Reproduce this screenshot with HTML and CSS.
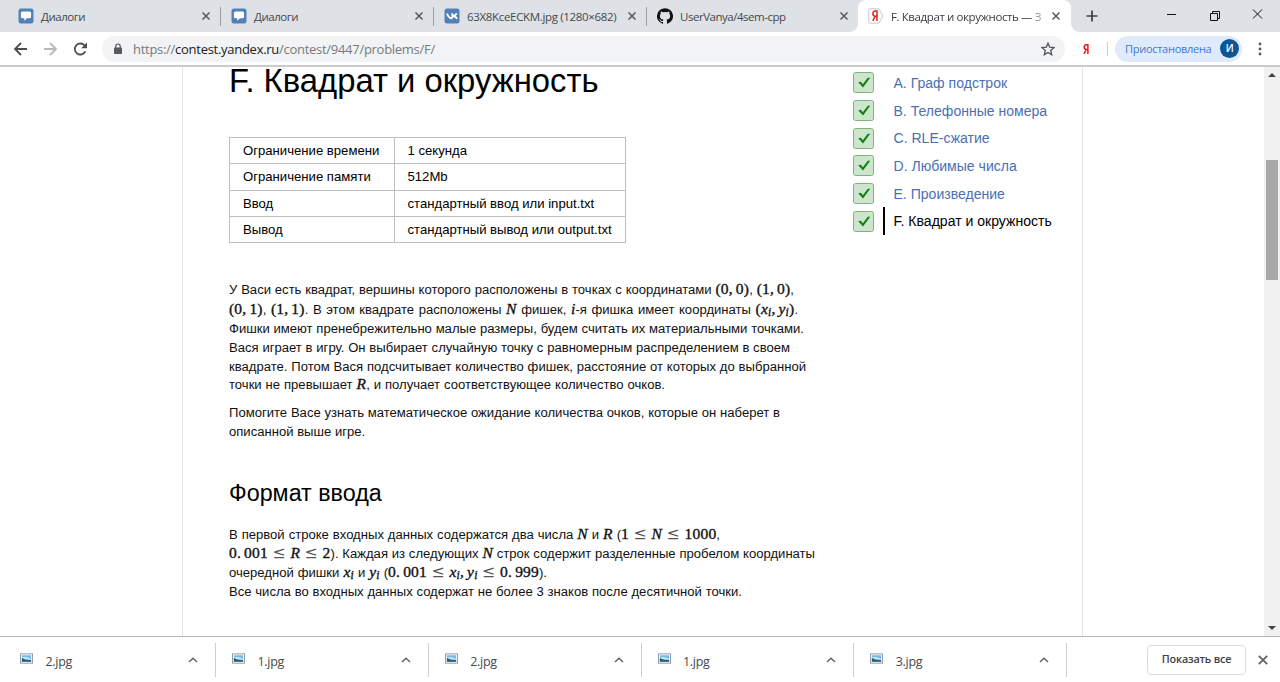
FILE: index.html
```html
<!DOCTYPE html>
<html lang="ru">
<head>
<meta charset="utf-8">
<title>F. Квадрат и окружность</title>
<link rel="stylesheet" href="styles.css">
</head>
<body>
<svg class="defs" width="0" height="0">
  <symbol id="chat" viewBox="0 0 16 16"><rect x=".5" y=".5" width="15" height="15" rx="2.5" fill="#5181b8"/><path d="M4.5 3.5h7a1.6 1.6 0 0 1 1.6 1.6v3.600a1.600 1.600 0 0 1-1.600 1.600H9L6.300 12.800v-2.500H4.500a1.600 1.600 0 0 1-1.600-1.600V5.100a1.600 1.600 0 0 1 1.600-1.600z" fill="#fff"/></symbol>
  <symbol id="close" viewBox="0 0 10 10"><path d="M1.500 1.500l7 7M8.500 1.500l-7 7" stroke="currentColor" stroke-width="1.500" fill="none"/></symbol>
  <symbol id="up" viewBox="0 0 10 6"><path d="M1 5l4-3.800L9 5" stroke="#5f6368" stroke-width="1.500" fill="none"/></symbol>
  <symbol id="picture" viewBox="0 0 14 11"><rect x=".5" y=".5" width="13" height="10" fill="#fff" stroke="#8b969e"/><rect x="2" y="2" width="10" height="7" fill="#76b8e8"/><path d="M2 4.500q4-2 10 1.500v1H2z" fill="#cce8f6"/><path d="M2 5l4 1.500 6 .5v2H2z" fill="#2a5f73"/></symbol>
  <symbol id="tick" viewBox="0 0 21 21"><rect x=".5" y=".5" width="20" height="20" rx="2" fill="#cce5cc" stroke="#80b380"/><path d="M5.200 10.300L8 9.800l1.800 2.400L14.800 5.800h2.400L10 15.600z" fill="#108010"/></symbol>
</svg>

<header class="tabs">
  <div class="tab"><svg class="fav"><use href="#chat"/></svg><span class="tab-title">Диалоги</span><svg class="x"><use href="#close"/></svg></div>
  <div class="tab"><svg class="fav"><use href="#chat"/></svg><span class="tab-title">Диалоги</span><svg class="x"><use href="#close"/></svg></div>
  <div class="tab"><svg class="fav" viewBox="0 0 16 16"><rect x=".5" y=".5" width="15" height="15" rx="2.500" fill="#5181b8"/><path d="M3 5.500q1.500 4.800 5.300 5M8.300 5.200v5M12.800 5.300q-1 2-3.800 2.700 2.800.5 4.200 2.700" stroke="#fff" stroke-width="1.800" fill="none"/></svg><span class="tab-title file-title">63X8KceECKM.jpg (1280×682)</span><svg class="x"><use href="#close"/></svg></div>
  <div class="tab last"><svg class="fav" viewBox="0 0 16 16"><path fill="#111" d="M8 .2a8 8 0 0 0-2.530 15.590c.4.070.550-.170.550-.380v-1.490c-2.230.480-2.690-.950-2.690-.950-.360-.920-.890-1.170-.890-1.170-.730-.500.050-.490.050-.490.800.060 1.230.830 1.230.830.720 1.220 1.870.870 2.330.660.070-.520.280-.870.510-1.070-1.780-.200-3.640-.890-3.640-3.950 0-.870.310-1.590.820-2.150-.080-.200-.360-1.020.080-2.120 0 0 .670-.210 2.200.820a7.600 7.600 0 0 1 4 0c1.530-1.040 2.200-.820 2.200-.820.440 1.100.160 1.920.080 2.120.510.560.820 1.270.820 2.150 0 3.070-1.870 3.750-3.650 3.950.290.250.540.730.540 1.480v2.200c0 .210.150.460.550.380A8 8 0 0 0 8 .2z"/></svg><span class="tab-title">UserVanya/4sem-cpp</span><svg class="x"><use href="#close"/></svg></div>
  <div class="tab active"><svg class="fav" viewBox="0 0 16 16"><path d="M2 .8h9l4 7.200-4 7.200H2q-1.200 0-1.200-1.200V2Q.8.8 2 .8z" fill="#fff" stroke="#c8c8c8"/><path d="M9 13V3H7.300Q4.900 3 4.900 5.800q0 2.400 2.300 2.400H9M7 8.200L4.800 13" fill="none" stroke="#e02020" stroke-width="1.500"/></svg><span class="tab-title fade">F. Квадрат и окружность — З</span><svg class="x"><use href="#close"/></svg></div>
  <svg class="plus" viewBox="0 0 12 12"><path d="M6 .5v11M.5 6h11" stroke="#3c4043" stroke-width="1.700"/></svg>
  <svg class="winctl" viewBox="0 0 100 14"><g fill="none" stroke="#111"><path d="M4 5.500h9M47.500 4.500h7v7h-7zM49.500 4.500v-2h7v7h-2M90 .5l9 9M99 .5l-9 9"/></g></svg>
</header>

<nav class="toolbar">
  <svg class="nav-icons" viewBox="0 0 80 16"><g fill="none" stroke-width="1.800"><path d="M15 8H3M9 2L3 8l6 6" stroke="#4b4f54"/><path d="M32 8h12M38 2l6 6-6 6" stroke="#b6b8ba"/><path d="M73.300 10.300A5.500 5.500 0 1 1 72.800 4.800" stroke="#4b4f54"/></g><path d="M75 1.500v5.800h-5.800z" fill="#4b4f54"/></svg>
  <div class="address">
    <svg class="lock" viewBox="0 0 10 12"><rect x="1" y="4.500" width="8" height="6.500" rx=".8" fill="#55595e"/><path d="M2.800 5V3.200a2.200 2.200 0 0 1 4.400 0V5" fill="none" stroke="#55595e" stroke-width="1.200"/></svg>
    <span class="url">https://<b>contest.yandex.ru</b>/contest/9447/problems/F/</span>
    <svg class="star" viewBox="0 0 14 14"><path d="M7 1.200l1.700 4 4.300.4-3.300 2.800 1 4.300L7 10.400l-3.700 2.300 1-4.300L1 5.600l4.300-.4z" fill="none" stroke="#4f5357" stroke-width="1.300"/></svg>
  </div>
  <svg class="ya" viewBox="0 0 6 10"><path d="M4.900 10V.8H3.800Q1.200.8 1.200 3.300q0 2.200 2.300 2.200H5M3.200 5.500L1 10" fill="none" stroke="#e32020" stroke-width="1.500"/></svg>
  <i class="divider"></i>
  <div class="profile"><span>Приостановлена</span><b>И</b></div>
  <svg class="dots" viewBox="0 0 4 14"><g fill="#55595e"><circle cx="2" cy="2" r="1.400"/><circle cx="2" cy="7" r="1.400"/><circle cx="2" cy="12" r="1.400"/></g></svg>
</nav>

<div class="viewport">
  <div class="page">
    <main class="problem">
      <h1>F. Квадрат и окружность</h1>
      <table class="limits">
        <tr><td class="key">Ограничение времени</td><td>1 секунда</td></tr>
        <tr><td class="key">Ограничение памяти</td><td>512Mb</td></tr>
        <tr><td class="key">Ввод</td><td>стандартный ввод или input.txt</td></tr>
        <tr><td class="key">Вывод</td><td>стандартный вывод или output.txt</td></tr>
      </table>
      <div class="legend">
        <div class="line tall w565">У Васи есть квадрат, вершины которого расположены в точках с координатами <span class="m">(0,<s></s>0)</span>, <span class="m">(1,<s></s>0)</span>,</div>
        <div class="line tall w569"><span class="m">(0,<s></s>1)</span>, <span class="m">(1,<s></s>1)</span>. В этом квадрате расположены <span class="m"><em>N</em></span> фишек, <span class="m"><em>i</em></span>-я фишка имеет координаты <span class="m">(<em>x<sub>i</sub></em>,<s></s><em>y<sub>i</sub></em>)</span>.</div>
        <div class="line w575">Фишки имеют пренебрежительно малые размеры, будем считать их материальными точками.</div>
        <div class="line w561">Вася играет в игру. Он выбирает случайную точку с равномерным распределением в своем</div>
        <div class="line w577">квадрате. Потом Вася подсчитывает количество фишек, расстояние от которых до выбранной</div>
        <div class="line w436">точки не превышает <span class="m"><em>R</em></span>, и получает соответствующее количество очков.</div>
      </div>
      <div class="legend second">
        <div class="line w551">Помогите Васе узнать математическое ожидание количества очков, которые он наберет в</div>
        <div class="line w136">описанной выше игре.</div>
      </div>
      <h2>Формат ввода</h2>
      <div class="legend">
        <div class="line w491">В первой строке входных данных содержатся два числа <span class="m"><em>N</em></span> и <span class="m"><em>R</em></span> (<span class="m">1<u>≤</u><em>N</em><u>≤</u>1000</span>,</div>
        <div class="line w586"><span class="m">0.<s></s>001<u>≤</u><em>R</em><u>≤</u>2</span>). Каждая из следующих <span class="m"><em>N</em></span> строк содержит разделенные пробелом координаты</div>
        <div class="line w318">очередной фишки <span class="m"><em>x<sub>i</sub></em></span> и <span class="m"><em>y<sub>i</sub></em></span> (<span class="m">0.<s></s>001<u>≤</u><em>x<sub>i</sub></em>,<s></s><em>y<sub>i</sub></em><u>≤</u>0.<s></s>999</span>).</div>
        <div class="line w513">Все числа во входных данных содержат не более 3 знаков после десятичной точки.</div>
      </div>
    </main>
    <aside class="problems">
      <div class="item"><svg class="tick"><use href="#tick"/></svg><a>A. Граф подстрок</a></div>
      <div class="item"><svg class="tick"><use href="#tick"/></svg><a>B. Телефонные номера</a></div>
      <div class="item"><svg class="tick"><use href="#tick"/></svg><a>C. RLE-сжатие</a></div>
      <div class="item"><svg class="tick"><use href="#tick"/></svg><a>D. Любимые числа</a></div>
      <div class="item"><svg class="tick"><use href="#tick"/></svg><a>E. Произведение</a></div>
      <div class="item current"><svg class="tick"><use href="#tick"/></svg><a>F. Квадрат и окружность</a></div>
    </aside>
  </div>
  <div class="scrollbar">
    <svg viewBox="0 0 8 4"><path d="M0 4l4-4 4 4z" fill="#444"/></svg>
    <i class="thumb"></i>
    <svg viewBox="0 0 8 4"><path d="M0 0l4 4 4-4z" fill="#444"/></svg>
  </div>
</div>

<footer class="shelf">
  <div class="file"><svg class="pic"><use href="#picture"/></svg><span>2.jpg</span><svg class="up"><use href="#up"/></svg></div>
  <div class="file"><svg class="pic"><use href="#picture"/></svg><span>1.jpg</span><svg class="up"><use href="#up"/></svg></div>
  <div class="file"><svg class="pic"><use href="#picture"/></svg><span>2.jpg</span><svg class="up"><use href="#up"/></svg></div>
  <div class="file"><svg class="pic"><use href="#picture"/></svg><span>1.jpg</span><svg class="up"><use href="#up"/></svg></div>
  <div class="file"><svg class="pic"><use href="#picture"/></svg><span>3.jpg</span><svg class="up"><use href="#up"/></svg></div>
  <button class="show-all">Показать все</button>
  <svg class="shelf-x"><use href="#close"/></svg>
</footer>
</body>
</html>
```
FILE: styles.css
```css
* { box-sizing: border-box; }
body {
  margin: 0; width: 1280px; height: 682px; overflow: hidden;
  display: flex; flex-direction: column;
  background: #fff; color: #000;
  font: 13px "Liberation Sans", Arial, sans-serif;
}
svg { display: block; flex: none; }
.defs { position: absolute; }

/* Tab strip */
.tabs {
  height: 32px; flex: none; display: flex; align-items: center;
  padding-left: 8px; background: #dee1e6;
  font: 11.500px "Open Sans", "Noto Sans", sans-serif; color: #45494d;
}
.tab {
  width: 213px; height: 32px; flex: none; display: flex; align-items: center;
  padding: 0 10px 0 10px; position: relative;
}
.tab:not(.last):not(.active)::after {
  content: ""; position: absolute; right: 0; top: 7px; width: 1px; height: 19px; background: #9a9da1;
}
.tab.last { width: 211px; padding-right: 9px; }
.tab.active { background: #fff; border-radius: 8px 8px 0 0; width: 213px; color: #3c4043; }
.tab.active::before, .tab.active::after {
  content: ""; position: absolute; bottom: 0; width: 8px; height: 8px;
}
.tab.active::before { left: -8px; background: radial-gradient(circle at 0 0, transparent 7.5px, #fff 8px); }
.tab.active::after { right: -8px; background: radial-gradient(circle at 100% 0, transparent 7.5px, #fff 8px); }
.fav { width: 16px; height: 16px; }
.tab-title { flex: 1; margin-left: 7px; white-space: nowrap; letter-spacing: -.47px; }
.file-title { letter-spacing: -.33px; }
.fade { -webkit-mask-image: linear-gradient(90deg, #000 86%, transparent); mask-image: linear-gradient(90deg, #000 86%, transparent); letter-spacing: -.4px; }
.x { width: 10px; height: 10px; color: #55595e; }
.plus { width: 12px; height: 12px; margin-left: 15px; }
.winctl { width: 100px; height: 14px; margin-left: 65px; }

/* Toolbar */
.toolbar {
  height: 35px; flex: none; display: flex; align-items: center;
  padding-left: 12px; border-bottom: 2px solid #cbcbcb;
  font-family: "Open Sans", "Noto Sans", sans-serif;
}
.nav-icons { width: 80px; height: 16px; }
.address {
  width: 963px; height: 26px; margin-left: 10px; padding: 0 10px 0 11px;
  display: flex; align-items: center; border-radius: 13px; background: #f1f3f4;
}
.lock { width: 10px; height: 12px; }
.url { flex: 1; margin-left: 10px; font-size: 13px; letter-spacing: -.28px; color: #777b80; }
.url b { font-weight: 400; color: #202124; }
.star { width: 14px; height: 14px; }
.ya { width: 6px; height: 10px; margin-left: 18px; }
.divider { width: 1px; height: 14px; margin-left: 18px; background: #c9ccd0; }
.profile {
  width: 127px; height: 26px; margin-left: 7px; padding: 0 3px 0 10px;
  display: flex; align-items: center; justify-content: space-between;
  border-radius: 13px; background: #dfebfc; color: #3f77d6;
  font-size: 11px; letter-spacing: -.28px; white-space: nowrap;
}
.profile b {
  width: 19px; height: 19px; border-radius: 50%; background: #0b5796; color: #fff;
  font-size: 10px; font-weight: 600; line-height: 19px; text-align: center;
}
.dots { width: 4px; height: 14px; margin-left: 16px; }

/* Page */
.viewport { flex: 1; min-height: 0; display: flex; justify-content: space-between; overflow: hidden; }
.page {
  width: 901px; margin-left: 182px; padding-left: 46px;
  display: grid; grid-template-columns: 623.500px 1fr;
  border: solid #e4e4e4; border-width: 0 1px;
}
h1, h2 { margin: 0; font-weight: 400; white-space: nowrap; }
h1 { font-size: 32.800px; line-height: 28px; }
h2 { margin: 37.500px 0 20.800px; font-size: 23.300px; line-height: 26px; }
.limits { width: 397px; margin: 42px 0 38px; border-collapse: collapse; table-layout: fixed; font-size: 13.130px; }
.limits td { height: 26.250px; padding: 1px 0 0 13px; border: 1px solid #bfbfbf; line-height: 18px; white-space: nowrap; }
.limits .key { width: 164.500px; }
.second { margin-top: 9.300px; }
.line { height: 18.800px; line-height: 18.800px; white-space: nowrap; text-align-last: justify; color: #111; font-size: 13.080px; }
.tall { height: 19.500px; }
.w565 { width: 565px; } .w569 { width: 569px; } .w575 { width: 575px; } .w561 { width: 561px; }
.w577 { width: 577px; } .w436 { width: 436px; } .w551 { width: 551px; } .w136 { width: 136px; }
.w491 { width: 491px; } .w586 { width: 586px; } .w318 { width: 318px; } .w513 { width: 513px; }
.m { font: 15.500px/0 "Liberation Serif", serif; letter-spacing: .2px; -webkit-text-stroke: .35px #111; }
.m s { display: inline-block; width: 3px; }
.m u { text-decoration: none; margin: 0 5px; font: 15.500px/0 "DejaVu Math TeX Gyre", "Liberation Serif", serif; color: #555; -webkit-text-stroke: 0; }
.m sub { font-size: 11.500px; line-height: 0; vertical-align: -2px; }

.problems { font-size: 14.050px; padding-top: 2px; }
.item { height: 27.650px; display: flex; align-items: center; color: #4a6fb3; }
.tick { width: 21px; height: 21px; }
.item a { height: 27.650px; margin-left: 9px; padding-left: 9px; line-height: 28px; border-left: 2px solid transparent; white-space: nowrap; }
.current { color: #000; }
.current a { border-color: #000; }

.scrollbar {
  width: 16px; display: flex; flex-direction: column; align-items: center;
  padding: 6px 0 6px; background: #f1f1f1;
}
.scrollbar svg { width: 8px; height: 4px; }
.thumb { width: 12px; height: 120px; margin: 83px 0 auto; background: #a8a8a8; }

/* Download shelf */
.shelf {
  height: 46px; flex: none; display: flex; align-items: center; border-top: 1px solid #b5b5b5;
  font: 12.500px "Open Sans", "Noto Sans", sans-serif; color: #45494d;
}
.file {
  width: 212.750px; height: 34px; flex: none; display: flex; align-items: center;
  padding: 0 17px 0 16px; border-right: 1px solid #cfcfcf;
}
.file:first-child { width: 216px; padding-left: 20px; }
.pic { width: 13px; height: 11px; margin-top: -3px; }
.file span { flex: 1; margin: 3px 0 0 12.500px; letter-spacing: -.3px; }
.up { width: 10px; height: 6px; }
.show-all {
  width: 99px; height: 30px; margin-left: 80px; padding: 0 0 2px; border: 1px solid #dadce0; border-radius: 4px;
  background: #fff; color: #3c4043; font: 600 10.800px "Open Sans", "Noto Sans", sans-serif; letter-spacing: -.2px; white-space: nowrap;
}
.shelf-x { width: 12px; height: 12px; margin-left: 11px; color: #5f6368; }
```
